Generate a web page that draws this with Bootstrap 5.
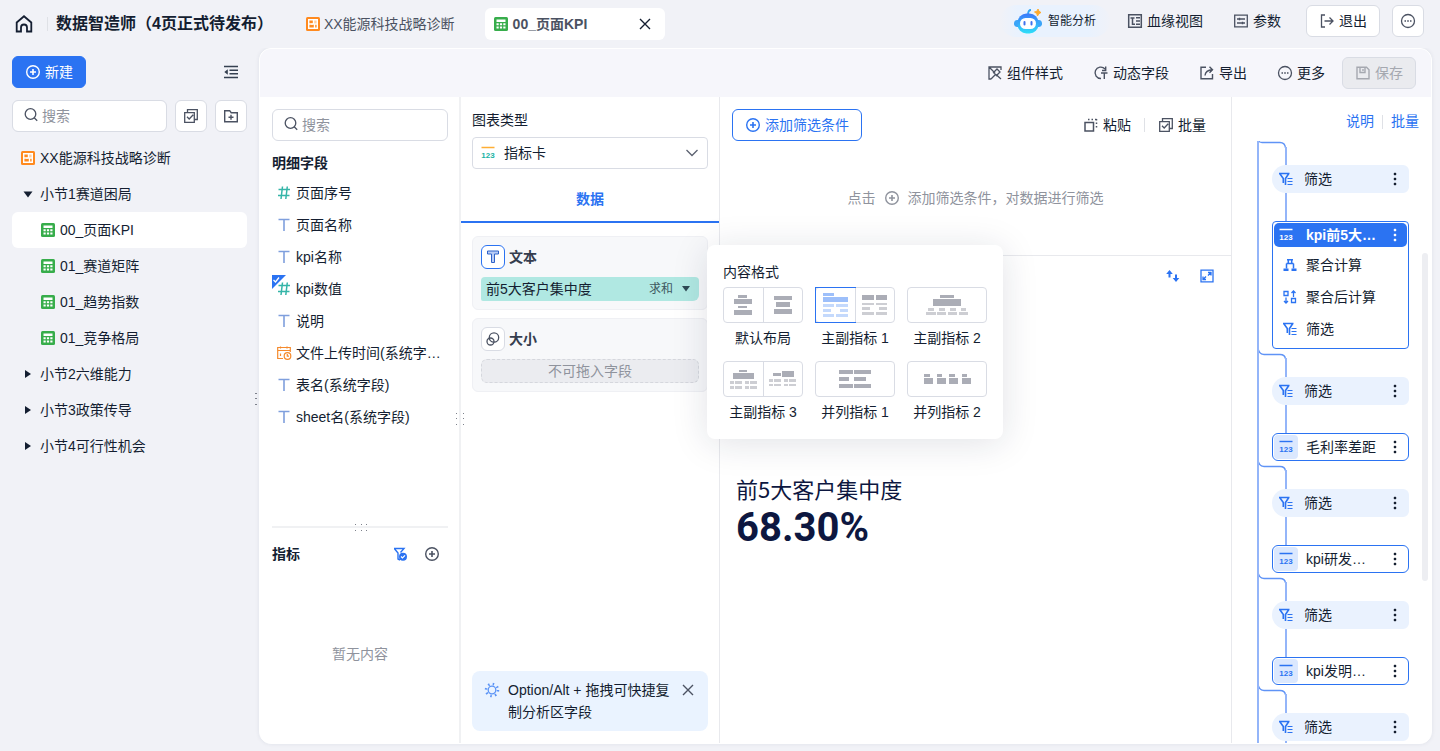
<!DOCTYPE html>
<html lang="zh-CN">
<head>
<meta charset="utf-8">
<meta name="viewport" content="width=device-width, initial-scale=1">
<title>数据智造师</title>
<link rel="stylesheet" href="https://cdn.jsdelivr.net/npm/bootstrap@5.3.0/dist/css/bootstrap.min.css">
<style>
:root{--ink:#141e31;--soft:#4b5262;--mute:#8f939d;--blue:#2b73f2;--line:#d9dce4;--hair:#e8e9ed;--page:#f1f2f7}
body{font:14px/20px "Liberation Sans","Noto Sans CJK SC",sans-serif;color:var(--ink);background:var(--page)}
svg{display:block;flex:none}
a{color:inherit;text-decoration:none}
.ic{width:16px;height:16px;color:var(--soft)}
.btn{--bs-btn-font-size:14px;--bs-btn-line-height:20px;--bs-btn-border-radius:6px;--bs-btn-color:var(--ink);height:32px;padding:0 12px;display:inline-flex;align-items:center;justify-content:center;gap:4px;white-space:nowrap;flex:none}
.btn-plain{padding:0;border:0}
.btn-box{background:#fff;border-color:var(--line)}
.btn-sq{width:32px;padding:0}
.btn-main{background:var(--blue);border-color:var(--blue);color:#fff}
.btn-line{background:#fff;border-color:var(--blue);color:var(--blue)}
.btn-save,.btn-save:disabled{background:#eaebef;border-color:var(--line);color:#a5a8b0;opacity:1;margin-left:-13px}
.app{height:100vh;min-height:560px}
.topbar{height:48px;padding:0 16px 0 14px}
.topbar .vline{margin:0 8px 0 13px}
.top-actions{padding-bottom:6px}
.vline{width:1px;height:14px;background:#dfe1e6}
.title-main{font-size:16px;line-height:24px;font-weight:700;margin:0}
.tab-top{height:32px;border-radius:6px;padding:0 8px;display:flex;align-items:center;gap:3px;color:var(--soft)}
.tab-top.active{background:#fff;width:180px;font-weight:700;gap:4px}
.tabs-top{gap:22px}
.ai-pill{height:32px;width:110px;border-radius:16px;background:linear-gradient(90deg,#f1f2f7 0,#e9f2fe 16%,#e9f2fe 80%,#f0f2f8 100%);font-size:12px;padding:0 0 0 14px;justify-content:flex-start;border:0;gap:6px;margin-right:17px}
.param-btn{margin:0 25px 0 30px}
.exit-btn{margin-right:12px}
.side{width:259px;padding:8px 12px}
.side-tools{gap:8px;margin:12px 0 8px}
.search{position:relative;min-width:0}
.search input{height:32px;font-size:14px;border:1px solid var(--line);border-radius:6px;padding:0 8px 0 29px}
.search input::placeholder{color:var(--mute)}
.search svg{position:absolute;left:11px;top:7px}
.tree a{display:flex;align-items:center;height:36px;border-radius:6px;gap:4px;padding-left:8px}
.tree ul ul a{padding-left:28px}
.tree a.active{background:#fff}
.grip{position:absolute;color:#7d818b}
.grip-side{right:1px;top:49%}
.grip-metrics{left:82px;top:-5px}
.grip-col{right:-6px;top:315px}
.panel{background:#fff;border-radius:12px;border:1px solid #fff;box-shadow:0 0 4px rgba(30,40,80,.08);margin:0 8px 7px 0;overflow:hidden}
.toolbar{height:48px;background:#f6f6fb;padding:0 15px;gap:30px}
.col-fields{width:201px;border-right:2px solid #f0f1f3;position:relative}
.fields-body{padding:12px 11px 0 12px}
.col-conf{width:259px;border-right:1px solid var(--hair);position:relative}
.conf-pad{padding:13px 11px 0}
.conf-pad label{margin-bottom:7px}
.col-rail{width:200px;border-left:1px solid var(--hair);position:relative}
.heading{font-weight:700;font-size:14px;line-height:20px;margin:0}
.fields a{display:flex;align-items:center;gap:4px;height:32px;padding-left:4px;position:relative}
.fields .picked{position:absolute;left:0;top:2px}
.metrics{height:217px;border-top:2px solid #f0f1f3;margin:0 11px 0 12px;position:relative}
.pick{position:relative}
.pick select{height:32px;width:100%;appearance:none;border:1px solid var(--line);border-radius:4px;background:#fff;padding:0 32px 0 31px;color:var(--ink)}
.pick svg{position:absolute;top:8px;pointer-events:none}
.tab-data{height:46px;border:0;border-bottom:2px solid var(--blue);background:none;color:var(--blue);font-weight:700;width:100%}
.shelf{background:#f7f8fa;border:1px solid #eff0f4;border-radius:6px;padding:8px;height:74px}
.shelf .btn{width:24px;height:24px;border-radius:6px}
.shelf h3{color:#353d4e}
.pill-field{height:24px;background:#b0e8e2;border-radius:4px 4px 6px 2px;padding:0 8px 0 5px}
.pill-field .agg{font-size:12px;color:#3f5860}
.pill-off{height:24px;background:#ebecf0;border:1px dashed #d5d7dd;border-radius:6px;color:var(--mute)}
.tip{background:#eaf3ff;border-radius:8px;padding:8px 12px;line-height:22px;height:60px;margin:auto 11px 12px;gap:8px}
.tip svg{margin-top:3px}
.fmt{position:absolute;left:246px;top:148px;width:296px;height:194px;padding:17px 16px;background:#fff;border-radius:8px;box-shadow:0 4px 36px rgba(20,30,60,.13);z-index:5}
.fmt-grid{display:grid;grid-template-columns:repeat(3,80px);gap:13px 12px;text-align:center;margin-top:5px}
.thumb{display:flex;height:36px;border:1px solid var(--line);border-radius:4px;margin-bottom:5px}
.thumb button{flex:1;border:0;background:none;padding:0;color:#abadb6}
.thumb button+button{border-left:1px solid var(--line)}
.thumb .on{color:#9dbffa;outline:1px solid var(--blue)}
.thumb .lt{opacity:.6}
.hint{color:var(--mute)}
.hint-bar{height:115px;border-bottom:1px solid var(--hair)}
.canvas-bar{padding:12px 25px 0 12px;gap:13px}
.canvas-tools{padding:12px 16px 0;gap:18px}
.kpi{padding:0 16px 4px;margin:auto 0}
.kpi-name{font:22px/32px "Noto Sans CJK SC",sans-serif;color:#0d1740;margin:0}
.kpi-num{font:700 40px/48px Roboto,sans-serif;color:#0d1740}
.rail-links{padding:14px 12px 0 0;height:36px}
.flowline{border-left:2px solid #94b5f9;padding:0 0 0 13px;margin:0 0 0 25px;width:152px}
.flowline .elbow{margin-left:-13px}
.stem{width:2px;height:28px;background:#94b5f9;margin-left:13px}
.node{height:28px;display:flex;align-items:center;width:137px}
.node-filter{background:#eaf2fe;border-radius:14px 6px 6px 14px;padding:0 6px 0 6px}
.node-filter .lbl{padding-left:10px}
.node-card{border:1px solid var(--blue);border-radius:6px;padding:0 5px 0 1px;background:#fff}
.node-card .lbl{padding-left:8px}
.node .tagbox{width:24px;height:24px;border-radius:4px;background:#dbe8fe;display:flex;align-items:center;justify-content:center}
.node .lbl{flex:1;color:var(--ink);white-space:nowrap}
.node .ic{color:var(--ink)}
.node-open{border:1px solid var(--blue);border-radius:4px;width:137px;height:128px;padding:1px}
.node-open .node{width:auto;height:24px;background:var(--blue);border-radius:5px;padding-right:4px;margin-bottom:2px}
.node-open .node .lbl,.node-open .node .ic{color:#fff}
.node-open .tagbox{background:none}
.node-open li{height:32px;display:flex;align-items:center;gap:8px;padding-left:8px}
.bluei,.node .bluei{color:var(--blue)}
.scrollthumb{position:absolute;right:3px;top:156px;width:6px;height:328px;border-radius:3px;background:#edeef2}
</style>
</head>
<body>
<svg width="0" height="0" class="position-absolute" aria-hidden="true">
<defs>
<symbol id="board" viewBox="0 0 16 16"><rect x="1" y="1" width="14" height="14" rx="1.500" fill="#ff8a1f"/><path d="M3.700 3.700h8.600v8.600H3.700zM3.700 8h8.600M8.500 3.700V8M9.500 8v4.300" fill="none" stroke="#fff" stroke-width="1.400"/><path d="M9 4h3v3.500H9zM6 7.500h2V9H6z" fill="#fff" opacity=".6"/></symbol>
<symbol id="sheet" viewBox="0 0 16 16"><rect x="1" y="1" width="14" height="14" rx="1.500" fill="#37ad4b"/><path d="M3.500 3.500h9v2.500h-9zM3.500 7.300h2.200v2H3.500zM6.900 7.300h2.200v2H6.900zM10.300 7.300h2.200v2h-2.200zM3.500 10.600h2.200v2H3.500zM6.900 10.600h2.200v2H6.900zM10.300 10.600h2.200v2h-2.200z" fill="#fff"/></symbol>
<symbol id="plus" viewBox="0 0 16 16"><circle cx="8" cy="8" r="6.300" fill="none" stroke="currentColor" stroke-width="1.400"/><path d="M8 5v6M5 8h6" stroke="currentColor" stroke-width="1.600"/></symbol>
<symbol id="more" viewBox="0 0 16 16"><circle cx="8" cy="8" r="6.500" fill="none" stroke="currentColor" stroke-width="1.300"/><path d="M4.500 7.200H6v1.600H4.500zM7.200 7.200h1.600v1.600H7.200zM10 7.200h1.500v1.600H10z" fill="currentColor"/></symbol>
<symbol id="find" viewBox="0 0 16 16"><circle cx="7.500" cy="7" r="5.300" fill="none" stroke="currentColor" stroke-width="1.300"/><path d="M11.200 10.800l3 3" stroke="currentColor" stroke-width="1.300"/></symbol>
<symbol id="batch" viewBox="0 0 16 16"><path d="M1.700 4.700h9.600v9.600H1.700z M4.500 4.500V1.700h9.800v9.800h-2.800 M4 8.800l2.200 2.200 4-4.200" fill="none" stroke="currentColor" stroke-width="1.300"/></symbol>
<symbol id="hash" viewBox="0 0 16 16"><path d="M2.500 4.500h11.500M2 10.500h11.500M6.500 1.500l-1.500 12.500M11.300 1.500L9.800 14" fill="none" stroke="#35b5a8" stroke-width="1.500"/></symbol>
<symbol id="tee" viewBox="0 0 16 16"><path d="M2.500 2.500h11M8 3v11" fill="none" stroke="#7f9fdd" stroke-width="1.600"/></symbol>
<symbol id="card123" viewBox="0 0 16 16"><path d="M1.500 2.500h13" stroke="currentColor" stroke-width="1.400"/><text x="8" y="13" text-anchor="middle" font-family="Liberation Sans,sans-serif" font-weight="700" font-size="8" fill="currentColor">123</text></symbol>
<symbol id="filter" viewBox="0 0 16 16"><path d="M1 2.500h10.500M1.700 2.500l3.600 5v4.500M10.800 2.500L7.500 7.500v6.500" fill="none" stroke="currentColor" stroke-width="1.600"/><path d="M9.500 7.500h5M9.500 10.500h5M9.500 13.500h5" stroke="currentColor" stroke-width="1.200"/></symbol>
<symbol id="dots" viewBox="0 0 16 16"><path d="M7 2h2v2H7zM7 7h2v2H7zM7 12h2v2H7z" fill="currentColor" stroke="currentColor" stroke-width=".4"/></symbol>
<symbol id="elbow" viewBox="0 0 29 28"><path d="M-1 -1Q0 5.500 5 5.500H21Q26 5.500 26.500 10" fill="none" stroke="#5f93f6" stroke-width="1.300"/><path d="M27 9V28" stroke="#94b5f9" stroke-width="2"/></symbol>
<symbol id="agg" viewBox="0 0 16 16"><path d="M5 2.700h6M6.300 2.700v3.500M9.700 2.700v3.500M4.500 6.500h7M4.500 6.500v5M11.500 6.500v5" fill="none" stroke="currentColor" stroke-width="1.500"/><path d="M1.500 11.500H6.500V14H1.500zM9.500 11.500h5V14h-5z" fill="currentColor"/></symbol>
<symbol id="aggafter" viewBox="0 0 16 16"><path d="M2 2.500h4v4H2zM9.500 9.500h4v4h-4zM11.500 8V2M9.500 4l2-2 2 2M4 8.500v5.500M2 12l2 2 2-2" fill="none" stroke="currentColor" stroke-width="1.300"/></symbol>
<symbol id="shut" viewBox="0 0 16 16"><path d="M3 3l10 10M13 3L3 13" stroke="currentColor" stroke-width="1.400"/></symbol>
</defs></svg>

<div class="app d-flex flex-column overflow-hidden">
<header class="topbar d-flex align-items-center flex-shrink-0">
  <a href="#" aria-label="首页"><svg width="20" height="20" viewBox="0 0 20 20" fill="none" stroke="currentColor" stroke-width="1.800"><path d="M2.700 8.500L10 2.300l7.300 6.200V17.500H13v-4a3 3 0 0 0-6 0v4H2.700z"/></svg></a>
  <span class="vline"></span>
  <h1 class="title-main text-nowrap">数据智造师（4页正式待发布）</h1>
  <nav class="tabs-top d-flex ms-4">
    <a href="#" class="tab-top text-nowrap">
      <svg class="ic"><use href="#board"/></svg>XX能源科技战略诊断</a>
    <a href="#" class="tab-top active text-nowrap" aria-current="page"><svg class="ic"><use href="#sheet"/></svg><span class="flex-grow-1">00_页面KPI</span>
      <svg class="me-1" width="16" height="16" color="#141e31"><use href="#shut"/></svg></a>
  </nav>
  <div class="top-actions ms-auto d-flex align-items-center">
    <button class="btn ai-pill"><svg width="28" height="28" viewBox="0 0 28 28"><defs><linearGradient id="rb" x2="0" y2="1"><stop stop-color="#3c78fa"/><stop offset="1" stop-color="#2fe0f8"/></linearGradient></defs><path d="M14 8c0-3 1-5 3-5" fill="none" stroke="#2fa5f6" stroke-width="1.800"/><path d="M4 13a3 3 0 0 0-1 7h3zM24 13a3 3 0 0 1 1 7h-3z" fill="#3ba4f8"/><rect x="3.500" y="6.500" width="21" height="20" rx="9" fill="url(#rb)"/><rect x="6" y="11" width="16" height="11" rx="5.500" fill="#fff"/><path d="M10.500 15v2.500M17.500 15v2.500" stroke="#3f72ee" stroke-width="2" stroke-linecap="round"/><path d="M24 2q.5 3 3 3.500Q24.500 6 23.500 9q0-3-3-4 3 0 3.500-3z" fill="#ffab2e" stroke="#ffab2e"/></svg>智能分析</button>
    <button class="btn btn-plain"><svg class="ic" viewBox="0 0 16 16" fill="none" stroke="currentColor"><path d="M1.700 1.700h12.600v12.600H1.700z" stroke-width="1.500"/><path d="M3.500 5h4M9 4.800h4M9 8h4M9 11.300h4M5.500 5v6.300H8" stroke-width="1.500"/></svg>血缘视图</button>
    <button class="btn btn-plain param-btn"><svg class="ic" viewBox="0 0 16 16" fill="none" stroke="currentColor"><path d="M1.700 2.200h12.600v11.600H1.700z" stroke-width="1.300"/><path d="M4 6h8M4 10h8M6.500 4.700v2.600M9.500 8.700v2.600" stroke-width="1.400"/></svg>参数</button>
    <button class="btn btn-box exit-btn"><svg class="ic" viewBox="0 0 16 16" fill="none" stroke="currentColor" stroke-width="1.300"><path d="M6 2H2.500v12H6M5.500 8H14M10.500 4.500L14 8l-3.500 3.500"/></svg>退出</button>
    <button class="btn btn-box btn-sq" aria-label="更多操作"><svg class="ic"><use href="#more"/></svg></button>
  </div>
</header>

<div class="d-flex flex-grow-1 overflow-hidden">
<aside class="side flex-shrink-0 position-relative">
  <div class="d-flex justify-content-between align-items-center">
    <button class="btn btn-main"><svg class="ic text-white"><use href="#plus"/></svg>新建</button>
    <button class="btn btn-plain me-2" aria-label="收起"><svg class="ic" viewBox="0 0 16 16"><path d="M1 2.500h14M6.500 6.200H15M6.500 9.800H15M1 13.500h14" stroke="#354050" stroke-width="1.600"/><path d="M1.300 8l3.500-2.800v5.600z" fill="#354050"/></svg></button>
  </div>
  <div class="side-tools d-flex">
    <div class="search flex-grow-1"><svg class="ic"><use href="#find"/></svg><input class="form-control" placeholder="搜索" aria-label="搜索页面"></div>
    <button class="btn btn-box btn-sq" aria-label="批量选择"><svg class="ic"><use href="#batch"/></svg></button>
    <button class="btn btn-box btn-sq" aria-label="新建文件夹"><svg class="ic" viewBox="0 0 16 16" fill="none" stroke="currentColor" stroke-width="1.400"><path d="M1.700 2.700h5l1.500 2h6.100v9H1.700zM8 6.800v5M5.500 9.300h5"/></svg></button>
  </div>
  <nav class="tree"><ul class="list-unstyled m-0">
    <li><a href="#"><svg class="ic"><use href="#board"/></svg>XX能源科技战略诊断</a></li>
    <li><a href="#"><svg class="ic" viewBox="0 0 16 16"><path d="M3.500 5.500h9L8 11.500z" fill="#141e31"/></svg>小节1赛道困局</a>
      <ul class="list-unstyled">
      <li><a href="#" class="active"><svg class="ic"><use href="#sheet"/></svg>00_页面KPI</a></li>
      <li><a href="#"><svg class="ic"><use href="#sheet"/></svg>01_赛道矩阵</a></li>
      <li><a href="#"><svg class="ic"><use href="#sheet"/></svg>01_趋势指数</a></li>
      <li><a href="#"><svg class="ic"><use href="#sheet"/></svg>01_竞争格局</a></li></ul></li>
    <li><a href="#"><svg class="ic" viewBox="0 0 16 16"><path d="M5 4l6 4-6 4z" fill="#141e31"/></svg>小节2六维能力</a></li>
    <li><a href="#"><svg class="ic" viewBox="0 0 16 16"><path d="M5 4l6 4-6 4z" fill="#141e31"/></svg>小节3政策传导</a></li>
    <li><a href="#"><svg class="ic" viewBox="0 0 16 16"><path d="M5 4l6 4-6 4z" fill="#141e31"/></svg>小节4可行性机会</a></li>
  </ul></nav>
  <svg class="grip grip-side" width="4" height="14" fill="currentColor"><path d="M1 1h2v1H1zM1 6h2v1H1zM1 12h2v1H1z"/></svg>
</aside>

<main class="panel flex-grow-1 d-flex flex-column">
  <div class="toolbar d-flex align-items-center justify-content-end flex-shrink-0">
    <button class="btn btn-plain"><svg class="ic" viewBox="0 0 16 16" fill="none" stroke="currentColor" stroke-width="1.300"><path d="M14 5V2H2v12h2M2.500 2.500L8 8M4 14l5-5M6.500 7.500L10 4l3 3-3.500 3.500zM9 9.500l5 4.500"/></svg>组件样式</button>
    <button class="btn btn-plain"><svg class="ic" viewBox="0 0 16 16" fill="none" stroke="currentColor" stroke-width="1.400"><path d="M8 13.500A5.700 5.700 0 1 1 12 4M12.700 1.500v4H9M8 8h6.500M11.300 8v6"/></svg>动态字段</button>
    <button class="btn btn-plain"><svg class="ic" viewBox="0 0 16 16" fill="none" stroke="currentColor" stroke-width="1.400"><path d="M7 2.200H2v11.600h11.500V9M6 10.500Q6.500 5 13.500 4.700M10.500 1.700l3 3-3 3"/></svg>导出</button>
    <button class="btn btn-plain"><svg class="ic"><use href="#more"/></svg>更多</button>
    <button class="btn btn-save" disabled><svg width="16" height="16" viewBox="0 0 16 16" fill="none" stroke="currentColor" stroke-width="1.400"><path d="M2 2.200h9.500l2.500 2.500v9.100H2zM5 2.500v5h5v-5M8 4v2"/></svg>保存</button>
  </div>
  <div class="d-flex flex-grow-1 overflow-hidden position-relative">
    <section class="col-fields flex-shrink-0 d-flex flex-column">
      <div class="fields-body flex-grow-1">
        <div class="search"><svg class="ic"><use href="#find"/></svg><input class="form-control" placeholder="搜索" aria-label="搜索字段"></div>
        <h2 class="heading mt-2 pt-1">明细字段</h2>
        <nav class="fields pt-1">
          <a href="#"><svg class="ic"><use href="#hash"/></svg><span>页面序号</span></a>
          <a href="#"><svg class="ic"><use href="#tee"/></svg><span>页面名称</span></a>
          <a href="#"><svg class="ic"><use href="#tee"/></svg><span>kpi名称</span></a>
          <a href="#"><svg class="picked" width="14" height="14" viewBox="0 0 14 14"><path d="M0 0h14L0 14z" fill="#2b73f2"/><path d="M1.500 5l2 2 3.500-4.500" fill="none" stroke="#fff" stroke-width="1.300"/></svg><svg class="ic"><use href="#hash"/></svg><span>kpi数值</span></a>
          <a href="#"><svg class="ic"><use href="#tee"/></svg><span>说明</span></a>
          <a href="#"><svg class="ic" viewBox="0 0 16 16" fill="none" stroke="#f58a2c" stroke-width="1.200"><path d="M7 13.500H1.700v-11h12.600V7M1.700 5.500h12.600M4.500 8.500V11M4.500 1.500v2M11 1.500v2"/><circle cx="11.500" cy="11" r="3.300"/><path d="M11.300 9v2.200h1.700"/></svg><span class="text-nowrap">文件上传时间(系统字…</span></a>
          <a href="#"><svg class="ic"><use href="#tee"/></svg><span>表名(系统字段)</span></a>
          <a href="#"><svg class="ic"><use href="#tee"/></svg><span>sheet名(系统字段)</span></a>
        </nav>
      </div>
      <div class="metrics flex-shrink-0">
        <svg class="grip grip-metrics" width="14" height="9" fill="currentColor"><path d="M1 1h1v1H1zM7 1h1v1H7zM12 1h1v1h-1zM1 7h1v1H1zM7 7h1v1H7zM12 7h1v1h-1z"/></svg>
        <div class="d-flex align-items-center pt-3 pe-2"><h2 class="heading me-auto">指标</h2>
          <button class="btn btn-plain h-auto me-3" aria-label="筛选指标"><svg class="ic bluei" viewBox="0 0 16 16"><path d="M2 2.500h10L8.500 6.500M2.500 2.800L6 7v6l2 1" fill="none" stroke="currentColor" stroke-width="1.400"/><circle cx="11" cy="10.700" r="4" fill="currentColor"/><path d="M9 10.500l1.500 1.500 2.500-2.700" fill="none" stroke="#fff" stroke-width="1.200"/></svg></button>
          <button class="btn btn-plain h-auto" aria-label="新增指标"><svg class="ic"><use href="#plus"/></svg></button></div>
        <p class="hint text-center pt-5 mt-4 mb-0">
          <span class="d-block pt-2">暂无内容</span></p>
      </div>
      <svg class="grip grip-col" width="10" height="14" fill="currentColor"><path d="M1 1h1v1H1zM1 6h1v1H1zM1 12h1v1H1zM8 1h1v1H8zM8 6h1v1H8zM8 12h1v1H8z"/></svg>
    </section>

    <section class="col-conf flex-shrink-0 d-flex flex-column">
      <div class="conf-pad">
        <label for="ctype" class="d-block">图表类型</label>
        <div class="pick"><svg class="start-0 ms-2" width="16" height="16" viewBox="0 0 16 16"><path d="M1.500 2.500h13" stroke="#ffae35" stroke-width="1.600"/><text x="8" y="13" text-anchor="middle" font-family="Liberation Sans,sans-serif" font-weight="700" font-size="8" fill="#18b3a4">123</text></svg>
        <select id="ctype"><option>指标卡</option></select>
        <svg class="end-0 me-2" width="16" height="16" viewBox="0 0 16 16"><path d="M2.500 5l5.500 5.500L13.500 5" fill="none" stroke="#5c6270" stroke-width="1.300"/></svg></div>
      </div>
      <button class="tab-data mt-2 pt-0">数据</button>
      <div class="conf-pad d-grid gap-2">
        <div class="shelf">
          <div class="d-flex align-items-center gap-1 mb-2"><button class="btn btn-line p-0" aria-label="文本设置"><svg width="16" height="16" viewBox="0 0 16 16"><path d="M2.500 2h11v3h-4v8.500h-3V5h-4z" fill="#b9cdf6" stroke="#2f62c9"/></svg></button><h3 class="heading">文本</h3></div>
          <div class="pill-field d-flex align-items-center"><span class="me-auto">前5大客户集中度</span><span class="agg">求和</span><svg class="ms-2" width="10" height="8"><path d="M1 1h8L5 6.500z" fill="#2f4a55"/></svg></div>
        </div>
        <div class="shelf">
          <div class="d-flex align-items-center gap-1 mb-2"><button class="btn btn-box p-0" aria-label="大小设置"><svg class="ic" viewBox="0 0 16 16" fill="none" stroke="currentColor" stroke-width="1.300"><circle cx="9" cy="6.500" r="4.700"/><circle cx="5.500" cy="10.500" r="3.500"/></svg></button><h3 class="heading">大小</h3></div>
          <div class="pill-off d-flex align-items-center justify-content-center">不可拖入字段</div>
        </div>
      </div>
      <div class="tip d-flex">
        <svg width="16" height="16" viewBox="0 0 16 16"><circle cx="8" cy="8" r="3.800" fill="none" stroke="#5c94f6" stroke-width="1.300"/><circle cx="8" cy="8" r="6" fill="none" stroke="#5c94f6" stroke-width="2.500" stroke-dasharray="1.500 3.210"/></svg>
        <span class="flex-grow-1">Option/Alt + 拖拽可快捷复制分析区字段</span>
        <button class="btn btn-plain h-auto align-self-start" aria-label="关闭提示"><svg class="ic"><use href="#shut"/></svg></button>
      </div>
      <div class="fmt" role="dialog" aria-label="内容格式">
        <div>内容格式</div>
        <div class="fmt-grid">
          <div><div class="thumb">
            <button aria-label="默认布局 居中"><svg width="39" height="34" fill="currentColor"><path d="M14 7h9v3h-9zM10 11h18v5H10zM14 18h9v2h-9zM10 22h18v5H10z"/></svg></button>
            <button aria-label="默认布局 对齐"><svg width="38" height="34" fill="currentColor"><path d="M10 8h18v4H10zM12 14h14v5H12zM10 21h18v5H10z"/></svg></button></div>默认布局</div>
          <div><div class="thumb">
            <button class="on" aria-label="主副指标 1 纵向"><svg width="39" height="34" fill="currentColor"><path d="M7 5h11v3H7zM7 9h25v5H7z"/><path class="lt" d="M7 16h11v3H7zM20 16h12v3H20zM7 21h8v3H7zM24 21h8v3h-8zM7 26h11v3H7zM20 26h12v3H20z"/></svg></button>
            <button aria-label="主副指标 1 横向"><svg width="38" height="34" fill="currentColor"><path d="M6 7h12v5H6zM20 7h11v5H20z"/><path class="lt" d="M6 15h12v2H6zM20 15h11v2H20zM6 19h8v3H6zM23 19h8v3h-8zM6 24h12v3H6zM20 24h11v3H20z"/></svg></button></div>主副指标 1</div>
          <div><div class="thumb">
            <button aria-label="主副指标 2"><svg width="78" height="34" fill="currentColor"><path d="M32 7h14v3H32zM25 11h28v7H25z"/><path class="lt" d="M20 20h6v3h-6zM31 20h6v3h-6zM42 20h6v3h-6zM53 20h5v3h-5zM18 24h10v3H18zM29 24h9v3h-9zM40 24h9v3h-9zM51 24h9v3h-9z"/></svg></button></div>主副指标 2</div>
          <div><div class="thumb">
            <button aria-label="主副指标 3 居中"><svg width="39" height="34" fill="currentColor"><path d="M15 8h8v2h-8zM9 11h21v6H9z"/><path class="lt" d="M6 19h4v3H6zM11 19h7v3h-7zM21 19h4v3h-4zM26 19h7v3h-7zM6 24h4v3H6zM11 24h7v3h-7zM21 24h4v3h-4zM26 24h7v3h-7z"/></svg></button>
            <button aria-label="主副指标 3 并排"><svg width="38" height="34" fill="currentColor"><path d="M9 11h8v3H9zM18 9h12v6H18z"/><path class="lt" d="M5 17h4v3H5zM10 17h7v3h-7zM20 17h4v3h-4zM25 17h7v3h-7zM5 22h4v2H5zM10 22h7v2h-7zM20 22h4v2h-4zM25 22h7v2h-7z"/></svg></button></div>主副指标 3</div>
          <div><div class="thumb">
            <button aria-label="并列指标 1"><svg width="78" height="34" fill="currentColor"><path d="M23 8h14v4H23zM38 8h17v4H38zM23 15h10v4H23zM38 15h12v4H38zM23 22h14v4H23zM38 22h17v4H38z"/></svg></button></div>并列指标 1</div>
          <div><div class="thumb">
            <button aria-label="并列指标 2"><svg width="78" height="34" fill="currentColor"><path d="M16 12h6v3h-6zM16 16h9v6h-9zM29 12h5v3h-5zM29 16h9v6h-9zM41 12h6v3h-6zM41 16h9v6h-9zM54 12h5v3h-5zM54 16h9v6h-9z"/></svg></button></div>并列指标 2</div>
        </div>
      </div>
    </section>

    <section class="flex-grow-1 d-flex flex-column">
      <div class="canvas-bar d-flex align-items-center">
        <button class="btn btn-line me-auto"><svg class="ic bluei"><use href="#plus"/></svg>添加筛选条件</button>
        <button class="btn btn-plain"><svg class="ic" viewBox="0 0 16 16" fill="none" stroke="currentColor" stroke-width="1.500"><path d="M2 5.500h8.500V14H2z"/><path d="M5 2.500h9.500M13.500 2v10" stroke-dasharray="1.500 2"/></svg>粘贴</button>
        <span class="vline"></span>
        <button class="btn btn-plain"><svg class="ic"><use href="#batch"/></svg>批量</button>
      </div>
      <div class="hint hint-bar d-flex justify-content-center align-items-center gap-2"><span>点击</span><svg class="ic hint"><use href="#plus"/></svg><span>添加筛选条件，对数据进行筛选</span></div>
      <div class="canvas-tools d-flex justify-content-end">
        <button class="btn btn-plain h-auto" aria-label="排序"><svg class="ic bluei" viewBox="0 0 16 16" fill="currentColor"><path d="M4.500 2l3.300 4H5.500v3.500h-2V6H1.200zM11 14l-3.300-4H10V6.500h2V10h2.300z"/></svg></button>
        <button class="btn btn-plain h-auto" aria-label="全屏"><svg class="ic bluei" viewBox="0 0 16 16" fill="none" stroke="currentColor" stroke-width="1.300"><path d="M2 2.200h12v11.600H2zM9 4.500h3v3M12 4.500L9 7.500M7 11.500H4v-3M4 11.500l3-3"/></svg></button>
      </div>
      <div class="kpi">
        <h2 class="kpi-name">前5大客户集中度</h2>
        <div class="kpi-num">68.30%</div>
      </div>
    </section>

    <aside class="col-rail flex-shrink-0 overflow-hidden d-flex flex-column">
      <div class="rail-links d-flex justify-content-end align-items-start gap-2 bluei flex-shrink-0"><a href="#">说明</a><span class="vline align-self-center"></span><a href="#">批量</a></div>
      <div class="flex-grow-1 overflow-hidden pt-2">
      <div class="flowline">
        <svg class="elbow" width="29" height="24" viewBox="0 0 29 24"><path d="M-1 -1Q0 1.500 3 1.500H21Q26 1.500 26.500 7" fill="none" stroke="#5f93f6" stroke-width="1.300"/><path d="M27 6V24" stroke="#94b5f9" stroke-width="2"/></svg>
        <a href="#" class="node node-filter"><svg class="ic bluei"><use href="#filter"/></svg><span class="lbl">筛选</span><svg class="ic"><use href="#dots"/></svg></a>
        <div class="stem"></div>
        <div class="node-open"><a href="#" class="node"><span class="tagbox"><svg class="ic"><use href="#card123"/></svg></span><span class="lbl fw-bold ps-2">kpi前5大…</span><svg class="ic"><use href="#dots"/></svg></a>
          <ul class="list-unstyled m-0"><li><svg class="ic bluei"><use href="#agg"/></svg>聚合计算</li><li><svg class="ic bluei"><use href="#aggafter"/></svg>聚合后计算</li><li><svg class="ic bluei"><use href="#filter"/></svg>筛选</li></ul></div>
        <svg class="elbow" width="29" height="28"><use href="#elbow"/></svg>
        <a href="#" class="node node-filter"><svg class="ic bluei"><use href="#filter"/></svg><span class="lbl">筛选</span><svg class="ic"><use href="#dots"/></svg></a>
        <div class="stem"></div>
        <a href="#" class="node node-card"><span class="tagbox"><svg class="ic bluei"><use href="#card123"/></svg></span><span class="lbl">毛利率差距</span><svg class="ic"><use href="#dots"/></svg></a>
        <svg class="elbow" width="29" height="28"><use href="#elbow"/></svg>
        <a href="#" class="node node-filter"><svg class="ic bluei"><use href="#filter"/></svg><span class="lbl">筛选</span><svg class="ic"><use href="#dots"/></svg></a>
        <div class="stem"></div>
        <a href="#" class="node node-card"><span class="tagbox"><svg class="ic bluei"><use href="#card123"/></svg></span><span class="lbl">kpi研发…</span><svg class="ic"><use href="#dots"/></svg></a>
        <svg class="elbow" width="29" height="28"><use href="#elbow"/></svg>
        <a href="#" class="node node-filter"><svg class="ic bluei"><use href="#filter"/></svg><span class="lbl">筛选</span><svg class="ic"><use href="#dots"/></svg></a>
        <div class="stem"></div>
        <a href="#" class="node node-card"><span class="tagbox"><svg class="ic bluei"><use href="#card123"/></svg></span><span class="lbl">kpi发明…</span><svg class="ic"><use href="#dots"/></svg></a>
        <svg class="elbow" width="29" height="28"><use href="#elbow"/></svg>
        <a href="#" class="node node-filter"><svg class="ic bluei"><use href="#filter"/></svg><span class="lbl">筛选</span><svg class="ic"><use href="#dots"/></svg></a>
        <div class="stem"></div>
      </div></div>
      <div class="scrollthumb"></div>
    </aside>
  </div>
</main>
</div>
</div>
<script src="https://cdn.jsdelivr.net/npm/bootstrap@5.3.0/dist/js/bootstrap.bundle.min.js"></script>
</body>
</html>
